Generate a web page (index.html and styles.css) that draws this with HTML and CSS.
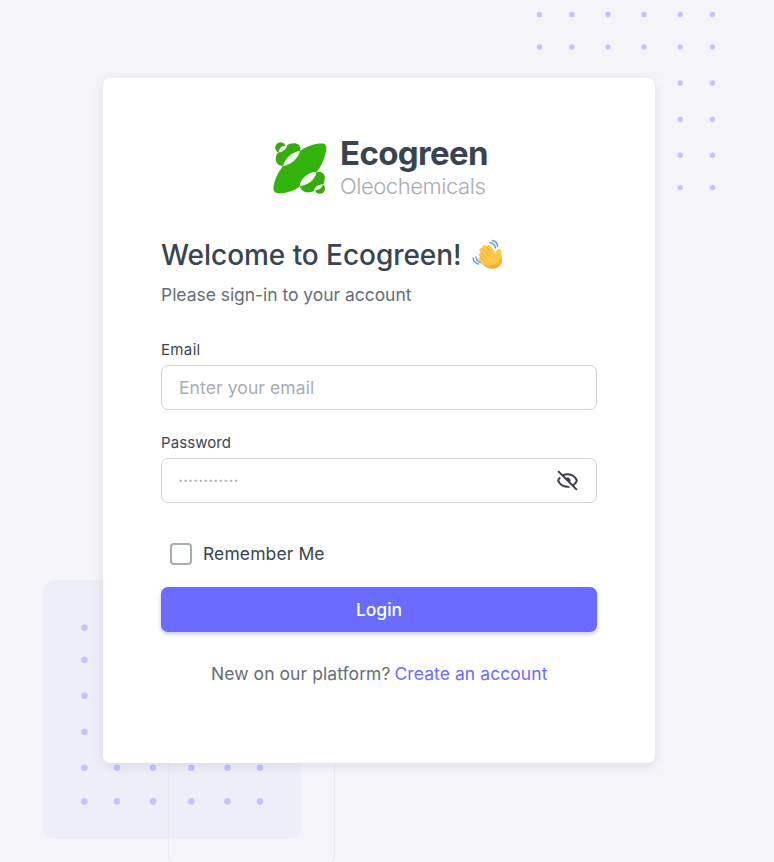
FILE: index.html
```html
<!DOCTYPE html>
<html lang="en">
<head>
<meta charset="utf-8">
<title>Login - Ecogreen</title>
<link rel="stylesheet" href="styles.css">
</head>
<body>
<main class="page">
  <svg class="backdrop" width="774" height="862" viewBox="0 0 774 862" aria-hidden="true">
    <rect x="43" y="580" width="258" height="259" rx="12" fill="#eeeef9"/>
    <rect x="168.500" y="700" width="166" height="165" rx="10" fill="none" stroke="#e9e9f0"/>
    <g class="dots dots-top">
      <path d="M539.500 14.500h0M571.800 14.500h0M608 14.500h0M644 14.500h0M680.200 14.500h0M712.500 14.500h0"/>
      <path d="M539.500 47h0M571.800 47h0M608 47h0M644 47h0M680.200 47h0M712.500 47h0"/>
      <path d="M680.200 83h0M712.500 83h0M680.200 119.200h0M712.500 119.200h0M680.200 155.200h0M712.500 155.200h0M680.200 187.600h0M712.500 187.600h0"/>
    </g>
    <g class="dots dots-bottom">
      <path d="M84.400 627.600h0M84.400 659.700h0M84.400 695.700h0M84.400 731.800h0"/>
      <path d="M84.400 767.800h0M116.900 767.800h0M153 767.800h0M191.400 767.800h0M227.500 767.800h0M260 767.800h0"/>
      <path d="M84.400 801.400h0M116.900 801.400h0M153 801.400h0M191.400 801.400h0M227.500 801.400h0M260 801.400h0"/>
    </g>
  </svg>
  <section class="card">
    <header class="brand">
      <svg class="brand-mark" width="54" height="54" viewBox="0 0 54 54" aria-hidden="true">
        <defs>
          <linearGradient id="leaf" gradientUnits="userSpaceOnUse" x1="0" y1="0" x2="54" y2="54">
            <stop offset="0" stop-color="#3da312"/>
            <stop offset=".5" stop-color="#30b60c"/>
            <stop offset="1" stop-color="#3da312"/>
          </linearGradient>
        </defs>
        <g fill="url(#leaf)">
          <circle cx="7.700" cy="6.600" r="5.400"/>
          <path d="M4.500 12C9 12 13 9 14 4.500C17 2 23 1.500 26 4C27.500 5.500 28 8 27 10C25 18 18 24 10 25C5 25 2 21 3 16C3.300 14 4 13 4.500 12Z"/>
          <path d="M27 10C34 4.500 44 2 50 2.500C53 3 54 6 53 10C51 20 47 27 43.500 31C35 31 27 38 27 45C22 50 11 53 4 52C0 51 0 47 1 43C3 35 7 29 10 25C18 24 25 18 27 10Z"/>
          <path d="M27 45C34 44 41 39 43.500 31C50 30 53 34 51.500 39C51.300 41 50.500 42.500 50 43.500C45 43.500 42 46 41 50C35 53 28 51 27 45Z"/>
          <circle cx="46.800" cy="47.500" r="5.200"/>
        </g>
        <path d="M5.500 11.500C6 7 9 4.500 14 4.500C13 8.500 10 11 5.500 11.500Z" fill="#eff8eb"/>
        <path d="M10 25C12 17 19 11 27 10C25 18 17 24 10 25Z" fill="#eff8eb"/>
        <path d="M27 45C28 37 36 31 43.500 31C42 39 35 44 27 45Z" fill="#eff8eb"/>
        <path d="M41 49.500C42 45.500 45 43.500 50 43.500C49 47 45.500 49.500 41 49.500Z" fill="#eff8eb"/>
      </svg>
      <div class="brand-text">
        <div class="brand-name">Ecogreen</div>
        <div class="brand-sub">Oleochemicals</div>
      </div>
    </header>
    <h1 class="title"><span>Welcome to Ecogreen!</span>
      <svg class="wave" width="32" height="32" viewBox="0 0 32 32" aria-hidden="true">
        <path d="M18 3.500C21 4 23 6 23.500 9M20.500 1.500C23.500 2 25.500 4.500 25.500 7.500M4 18C4.500 21 6.500 23 8.500 23.500M1 19C1.500 22 3.500 24.500 6.500 25" fill="none" stroke="#5d9fd4" stroke-width="1.500" stroke-linecap="round"/>
        <g fill="none" stroke="#ffca4b" stroke-width="4.200" stroke-linecap="round">
          <path d="M9.500 11L17 20M12.500 8.200L20 18M17 8L23 17M9 16L15 22M8.500 20.500L14 25"/>
        </g>
        <path d="M14 15L24.200 15C23.500 11.500 25.500 9.300 28 10.300C30 11.200 29.300 14 29.800 18C31 25 27 29.500 20.500 29.500C15.500 29.500 12 27 9 23.500Z" fill="#ffca4b"/>
        <path d="M10.800 9.500L17 17.500M14.600 7.500L20.500 15.500M9 13.500L15 20.500M8.500 18.200L13 22.500" fill="none" stroke="#eda634" stroke-width=".9" stroke-linecap="round"/>
        <path d="M29.800 18C31 25 27 29.500 20.500 29.500C16 29.500 12.500 27.500 9.500 24.200C17 28.500 26 27 29.800 18Z" fill="#f5ad3b"/>
      </svg>
    </h1>
    <p class="subtitle"><span>Please sign-in to your account</span></p>
    <form class="form">
      <label class="label label-email" for="email"><span>Email</span></label>
      <div class="field"><input id="email" class="input" type="text" placeholder="Enter your email"></div>
      <label class="label label-password" for="password"><span>Password</span></label>
      <div class="field">
        <input id="password" class="input input-password" type="password" placeholder="············">
        <svg class="eye" width="25" height="25" viewBox="0 0 24 24" aria-hidden="true">
          <path d="M12 19c.946 0 1.810-.103 2.598-.281l-1.757-1.757c-.273.021-.550.038-.841.038-5.351 0-7.424-3.846-7.926-5a8.642 8.642 0 0 1 1.508-2.297L4.184 8.305c-1.538 1.667-2.121 3.346-2.132 3.379a.994.994 0 0 0 0 .633C2.073 12.383 4.367 19 12 19zm0-14c-1.837 0-3.346.396-4.604.981L3.707 2.293 2.293 3.707l18 18 1.414-1.414-3.319-3.319c2.614-1.951 3.547-4.615 3.561-4.657a.994.994 0 0 0 0-.633C21.927 11.617 19.633 5 12 5zm4.972 10.558-2.280-2.280c.190-.390.308-.819.308-1.278 0-1.641-1.359-3-3-3-.459 0-.888.118-1.277.309L8.915 7.501A9.260 9.260 0 0 1 12 7c5.351 0 7.424 3.846 7.926 5-.302.692-1.166 2.342-2.954 3.558z"/>
        </svg>
      </div>
      <label class="remember"><input class="check" type="checkbox"><span class="remember-text">Remember Me</span></label>
      <button class="button" type="button"><span>Login</span></button>
    </form>
    <p class="footer"><span class="footer-text">New on our platform?</span><a class="link" href="#">Create an account</a></p>
  </section>
</main>
</body>
</html>
```
FILE: styles.css
```css
* { box-sizing: border-box; }
html, body { margin: 0; height: 100%; overflow: hidden; }
body {
  background: #f4f4f9;
  color: #384551;
  font-family: Inter, "Liberation Sans", sans-serif;
}
.page { position: relative; height: 862px; padding: 78px 119px 0 103px; }
.backdrop { position: absolute; inset: 0; }
.dots { fill: none; stroke: #c3c4ff; stroke-linecap: round; }
.dots-top { stroke-width: 5.400px; }
.dots-bottom { stroke-width: 6.600px; }
.card {
  position: relative;
  width: 552px;
  height: 685px;
  padding: 58px 58px 0;
  border-radius: 7px;
  background: #fff;
  box-shadow: 0 3px 12px rgba(34, 48, 62, .1);
}
.brand { display: flex; align-items: flex-start; height: 66px; padding-left: 112px; }
.brand-mark { margin-top: 5px; }
.brand-text { margin: -1px 0 0 13px; white-space: nowrap; }
.brand-name { height: 36px; font-size: 33px; line-height: 36px; font-weight: 700; letter-spacing: -.650px; }
.brand-sub { height: 30px; font-size: 22px; line-height: 30px; font-weight: 350; letter-spacing: -.440px; color: #a7acb2; }
.title {
  display: flex;
  align-items: center;
  gap: 10px;
  height: 38px;
  margin: 34px 0 0;
  font-size: 28px;
  line-height: 38px;
  font-weight: 500;
  letter-spacing: -.050px;
  white-space: nowrap;
}
.subtitle { height: 26px; margin: 8px 0 0; font-size: 17.500px; line-height: 26px; letter-spacing: -.040px; color: #646e78; }
.form { margin: 31px 0 0; }
.label { display: block; height: 22px; margin-bottom: 4px; font-size: 15px; line-height: 22px; }
.label-email { letter-spacing: .350px; }
.label-password { letter-spacing: .080px; }
.field {
  display: flex;
  align-items: center;
  height: 45px;
  padding: 0 16px 0 17px;
  border: 1px solid #ced1d5;
  border-radius: 7px;
}
.field + .label { margin-top: 22px; }
.input {
  flex: 1;
  min-width: 0;
  height: 43px;
  padding: 0;
  border: 0;
  outline: 0;
  background: transparent;
  font: 17.500px Inter, "Liberation Sans", sans-serif;
  letter-spacing: .100px;
}
.input-password { margin-left: -1px; letter-spacing: 0; }
.input::placeholder { color: #a7acb2; opacity: 1; }
.eye { flex: none; fill: #384551; }
.remember { display: flex; align-items: center; height: 24px; margin: 39px 0 0 9px; font-size: 17.500px; letter-spacing: .100px; }
.check {
  appearance: none;
  width: 22px;
  height: 22px;
  margin: 0 11px 0 0;
  border: 2px solid #a7acb2;
  border-radius: 4px;
}
.remember-text { margin-top: -1px; }
.button {
  display: block;
  width: 100%;
  height: 45px;
  margin-top: 21px;
  padding: 0;
  border: 0;
  border-radius: 7px;
  background: #696cff;
  box-shadow: 0 2px 4px rgba(105, 108, 255, .4);
  color: #fff;
  font: 500 17.500px/45px Inter, "Liberation Sans", sans-serif;
}
.footer { display: flex; margin: 29px 0 0 50px; gap: 4px; font-size: 17.500px; line-height: 26px; letter-spacing: .070px; color: #646e78; white-space: nowrap; }
.link { color: #696cff; text-decoration: none; }
```
